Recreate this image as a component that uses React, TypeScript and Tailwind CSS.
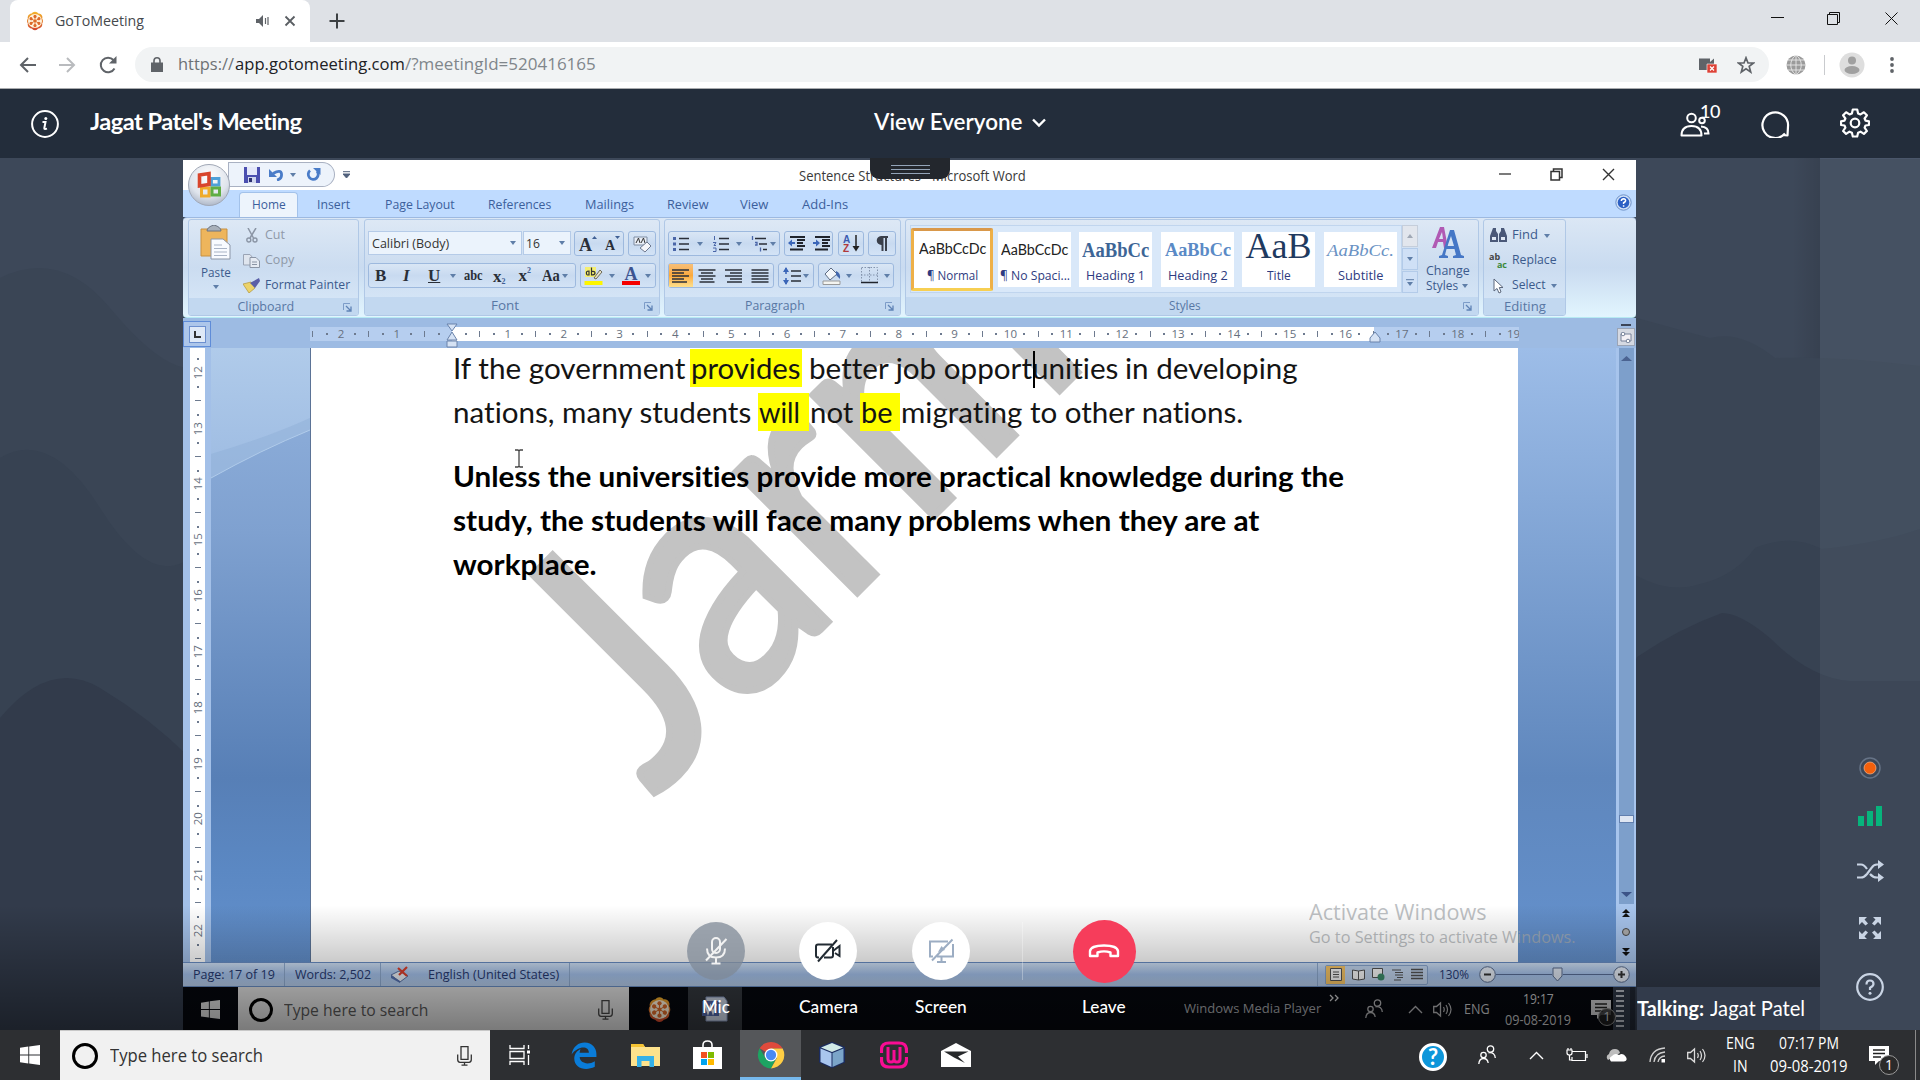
import { useLayoutEffect, useRef, useState, type ReactNode } from "react";

/* Text condensed or widened to a given pixel width. */
function Fit({ w, className = "", children }: { w: number; className?: string; children: string }) {
  const ref = useRef<HTMLSpanElement>(null);
  const [scale, setScale] = useState(1);
  useLayoutEffect(() => {
    const n = ref.current ? ref.current.offsetWidth : 0;
    if (n) setScale(w / n);
  }, [w, children]);
  return (
    <span className={"inline-block shrink-0 whitespace-pre text-left " + className} style={{ width: w }}>
      <span ref={ref} className="inline-block origin-left" style={{ transform: `scaleX(${scale})` }}>
        {children}
      </span>
    </span>
  );
}

function Ico({ w, h, vb, className = "", children }: { w: number; h: number; vb?: string; className?: string; children: ReactNode }) {
  return (
    <svg width={w} height={h} viewBox={vb ?? `0 0 ${w} ${h}`} fill="none" className={"block shrink-0 " + className}>
      {children}
    </svg>
  );
}

function Flower({ s, className = "" }: { s: number; className?: string }) {
  return (
    <Ico w={s} h={s} vb="0 0 24 24" className={className}>
      <defs>
        <linearGradient id="fl" x1="0" y1="0" x2="0" y2="1">
          <stop offset="0" stopColor="#f4b52c" />
          <stop offset="1" stopColor="#d0432b" />
        </linearGradient>
      </defs>
      <path d="M12 1c2 0 3 1 3.800 2 2-.3 4.500 1 5 3.500.2 1 0 1.800-.2 2.500 1.300 1.500 1.300 4.500 0 6 .8 3-1.800 6-4.800 6C15 22 14 23 12 23s-3-1-3.800-2c-3 0-5.600-3-4.800-6-1.300-1.500-1.300-4.500 0-6-.8-3 1.800-6 4.800-6C9 2 10 1 12 1z" fill="url(#fl)" />
      <circle cx="12" cy="12" r="8.400" fill="#fff3dc" />
      <circle cx="12" cy="12" r="1.700" fill="#e0782a" />
      {[0, 60, 120, 180, 240, 300].map((a) => (
        <circle key={a} cx="12" cy="6.500" r="1.900" fill="#dd6a29" transform={`rotate(${a} 12 12)`} />
      ))}
      {[0, 60, 120].map((a) => (
        <path key={a} d="M12 6V18" stroke="#dd6a29" strokeWidth="1" transform={`rotate(${a} 12 12)`} />
      ))}
    </Ico>
  );
}

const Down = ({ className = "" }: { className?: string }) => (
  <Ico w={6} h={4} className={className}>
    <path d="M0 0H6L3 4z" fill="#5f7ea8" />
  </Ico>
);

/* ---------- Browser ---------- */
function Browser() {
  return (
    <>
      <div className="flex h-[42px] bg-[#dee1e6]">
        <div className="ml-[10px] flex h-[42px] w-[300px] items-center rounded-t-lg bg-white">
          <Flower s={20} className="ml-[15px]" />
          <Fit w={89} className="mb-[2px] ml-[10px] text-[15px] leading-none text-[#45494d]">GoToMeeting</Fit>
          <Ico w={13} h={12} className="ml-[112px]">
            <path d="M0 4H3L7 0V12L3 8H0z" fill="#5f6368" />
            <path d="M9.500 3V9M12 2V10" stroke="#5f6368" strokeWidth="1.200" />
          </Ico>
          <Ico w={12} h={12} className="ml-[15px]">
            <path d="M1.500 1.500L10.500 10.500M10.500 1.500L1.500 10.500" stroke="#5a5e63" strokeWidth="1.800" />
          </Ico>
        </div>
        <Ico w={16} h={16} className="ml-[19px] mt-[13px]">
          <path d="M8 0.500V15.500M0.500 8H15.500" stroke="#3c4043" strokeWidth="2" />
        </Ico>
        <div className="ml-auto mr-[22px] flex h-[34px] items-center pt-[2px]">
          <Ico w={13} h={13}><path d="M0 5.500H13" stroke="#111" /></Ico>
          <Ico w={13} h={13} className="ml-[43px]"><path d="M.5 2.500H10.500V12.500H.5zM2.500 2.500V.5H12.500V10.500H10.500" stroke="#111" /></Ico>
          <Ico w={13} h={13} className="ml-[45px]"><path d="M.5.5L12.500 12.500M12.500.5L.5 12.500" stroke="#111" /></Ico>
        </div>
      </div>
      <div className="flex h-[47px] items-center border-b border-[#a9abae] bg-white pb-[1px]">
        <Ico w={17} h={16} className="ml-[19px]"><path d="M17 8H2M9 1L2 8l7 7" stroke="#5f6368" strokeWidth="2" /></Ico>
        <Ico w={17} h={16} className="ml-[23px]"><path d="M0 8H15M8 1l7 7-7 7" stroke="#b9bbbe" strokeWidth="2" /></Ico>
        <Ico w={18} h={18} className="ml-[23px]">
          <path d="M15.500 12.500A7.300 7.300 0 1 1 14.500 4" stroke="#5f6368" strokeWidth="2" />
          <path d="M17.500 0V7.500H10z" fill="#5f6368" />
        </Ico>
        <div className="ml-[18px] flex h-[35px] w-[1634px] items-center rounded-full bg-[#f1f3f4] text-[17px] leading-none">
          <Ico w={12} h={15} className="ml-[16px]">
            <path d="M0 5.500H12V15H0z" fill="#5f6368" />
            <path d="M3 6V3.800A3 3 0 0 1 9 3.800V6" stroke="#5f6368" strokeWidth="1.600" />
          </Ico>
          <div className="mb-[2px] ml-[15px] flex">
            <Fit w={56} className="text-[#6d7175]">https://</Fit>
            <Fit w={170} className="ml-[1px] text-[#202124]">app.gotomeeting.com</Fit>
            <Fit w={191} className="text-[#80868b]">/?meetingId=520416165</Fit>
          </div>
          <Ico w={18} h={16} className="ml-auto">
            <path d="M0 1.500H11V5L15 1.500V13H0z" fill="#5f6368" />
            <path d="M8 7H18V16H8z" fill="#dd4237" stroke="#fff" strokeWidth=".6" />
            <path d="M11 9.500L15 13.500M15 9.500L11 13.500" stroke="#fff" strokeWidth="1.200" />
          </Ico>
          <Ico w={18} h={18} className="ml-[20px] mr-[14px]">
            <path d="M9 1.800L11 7H16.500L12.200 10.400 13.700 16 9 12.700 4.300 16 5.800 10.400 1.500 7H7z" stroke="#5f6368" strokeWidth="1.700" />
          </Ico>
        </div>
        <Ico w={20} h={20} className="ml-[17px]">
          <circle cx="10" cy="10" r="9.500" fill="#9b9b9b" />
          <path d="M10 0V20M0 10H20M2 5H18M2 15H18M10 0C3 5 3 15 10 20M10 0C17 5 17 15 10 20" stroke="#e9e9e9" strokeWidth=".9" />
        </Ico>
        <div className="ml-[18px] h-5 w-px bg-[#c9cbce]" />
        <Ico w={26} h={26} className="ml-[14px]">
          <circle cx="13" cy="13" r="12.500" fill="#dedede" />
          <circle cx="13" cy="8.500" r="4" fill="#a0a0a0" />
          <ellipse cx="13" cy="18" rx="7.500" ry="4" fill="#a0a0a0" />
        </Ico>
        <Ico w={4} h={18} className="ml-[25px]">
          <circle cx="2" cy="3" r="1.900" fill="#5f6368" /><circle cx="2" cy="9" r="1.900" fill="#5f6368" /><circle cx="2" cy="15" r="1.900" fill="#5f6368" />
        </Ico>
      </div>
    </>
  );
}

/* ---------- Meeting header ---------- */
function Header() {
  return (
    <div className="flex h-[69px] items-center bg-[#232d3b] font-['Lato'] text-[22px] leading-none text-white">
      <Ico w={28} h={28} className="ml-[31px]">
        <circle cx="14" cy="14" r="12.900" stroke="#fff" strokeWidth="2" />
        <path d="M11.500 12H14.500L13.300 18.200Q13.300 19.500 16 18.600" stroke="#fff" strokeWidth="2" />
        <circle cx="14.800" cy="8.600" r="1.500" fill="#fff" />
      </Ico>
      <Fit w={212} className="mb-[3px] ml-[31px] font-bold tracking-[-0.5px]">Jagat Patel's Meeting</Fit>
      <Fit w={149} className="mb-[3px] ml-[572px] font-semibold">View Everyone</Fit>
      <Ico w={14} h={10} className="mb-[2px] ml-[9px]"><path d="M1 1.500L7 7.500 13 1.500" stroke="#fff" strokeWidth="2.400" /></Ico>
      <div className="relative ml-[634px] h-[30px] w-[40px]">
        <Ico w={30} h={25} className="mt-[3px]">
          <circle cx="11.500" cy="6" r="4.300" stroke="#fff" strokeWidth="2" />
          <path d="M1.500 23.500Q1.500 14 11.500 14T21.500 23.500z" stroke="#fff" strokeWidth="2" strokeLinejoin="round" />
          <circle cx="22" cy="8.500" r="2.800" stroke="#fff" strokeWidth="2" />
          <path d="M21 14.500Q28.500 15 28.500 21.500H24" stroke="#fff" strokeWidth="2" />
        </Ico>
        <span className="absolute -top-[7px] left-[20px] text-[18px] font-medium tracking-[-0.5px]">10</span>
      </div>
      <Ico w={30} h={30} className="mb-[2px] ml-[40px]">
        <path d="M25 25.500A12.800 12.800 0 1 1 28 18.500L27.500 27.500Q24.500 27.500 23 26.300" stroke="#fff" strokeWidth="2.200" strokeLinejoin="round" />
      </Ico>
      <Ico w={30} h={30} className="mb-[2px] ml-[50px]">
        <path d="M12.800 1.500H17.200L18.100 5.400 20.500 6.400 23.900 4.300 26.900 7.300 24.600 10.500 25.500 12.700 29 13.300V17L25.500 17.500 24.600 19.600 26.900 23 23.900 25.900 20.500 23.700 18.100 24.700 17.200 28.500H12.800L11.900 24.700 9.500 23.700 6.100 25.900 3.100 23 5.400 19.600 4.500 17.500 1 17V13.300L4.500 12.700 5.400 10.500 3.100 7.300 6.100 4.300 9.500 6.400 11.900 5.400z" stroke="#fff" strokeWidth="2.200" strokeLinejoin="round" />
        <circle cx="15" cy="15" r="4.300" stroke="#fff" strokeWidth="2.200" />
      </Ico>
    </div>
  );
}

/* ---------- Word ---------- */
function TitleBar() {
  return (
    <div className="relative flex h-[30px] items-center bg-white">
      <div className="ml-[45px] mt-[-1px] flex h-[25px] w-[107px] items-center rounded-l-[4px] rounded-r-full border border-[#a9b1c2] bg-[#edf3fb]">
        <Ico w={16} h={16} className="ml-[15px]">
          <path d="M0 0H16V16H0z" fill="#4b4fb0" /><path d="M3 0H13V8H3z" fill="#e4e8fa" /><path d="M4 10H12V16H4z" fill="#cfd5ee" /><path d="M5 11H8V15H5z" fill="#2c3170" />
        </Ico>
        <Ico w={15} h={13} className="ml-[9px]">
          <path d="M4 5.500Q12 1 12.500 6T8 12" stroke="#4a7cc8" strokeWidth="2.800" /><path d="M0 1V9H8z" fill="#4a7cc8" />
        </Ico>
        <Down className="ml-[6px]" />
        <Ico w={15} h={14} className="ml-[10px]">
          <path d="M4 2.500A5 5 0 1 0 11 3" stroke="#4a7cc8" strokeWidth="2.800" /><path d="M7 0H14.500V7z" fill="#4a7cc8" />
        </Ico>
      </div>
      <Ico w={7} h={7} className="mb-[1px] ml-[8px]"><path d="M0 .7H7M0 3H7L3.500 7z" stroke="#51617c" fill="#51617c" /></Ico>
      <Fit w={227} className="ml-[449px] mt-[2px] text-[14.500px] leading-none text-[#3a3a3a]">Sentence Structures - Microsoft Word</Fit>
      <Ico w={12} h={12} className="ml-[473px]"><path d="M0 5H12" stroke="#333" strokeWidth="1.300" /></Ico>
      <Ico w={13} h={13} className="mb-[2px] ml-[39px]"><path d="M1 3.500H9.500V12H1zM3.500 3.500V1H12V9.500H9.500" stroke="#333" strokeWidth="1.500" /></Ico>
      <Ico w={13} h={13} className="mb-[2px] ml-[39px]"><path d="M1 1L12 12M12 1L1 12" stroke="#333" strokeWidth="1.400" /></Ico>
      <div className="absolute left-[687px] top-[-2px] flex h-[21px] w-[80px] flex-col items-center gap-[3px] rounded-b-[9px] bg-[#23272d] pt-[7px]">
        <div className="h-px w-[39px] bg-[#93a4b8]" />
        <div className="h-px w-[39px] bg-[#93a4b8]" />
        <div className="h-px w-[39px] bg-[#93a4b8]" />
      </div>
      <Ico w={44} h={44} className="absolute left-[4px] top-[2px]">
        <defs>
          <radialGradient id="orb" cx=".5" cy=".3" r=".8"><stop offset="0" stopColor="#fff" /><stop offset=".6" stopColor="#dfe4ec" /><stop offset="1" stopColor="#9aa6ba" /></radialGradient>
        </defs>
        <circle cx="22" cy="23" r="20.500" fill="url(#orb)" stroke="#a1a8b6" />
        <path d="M24.500 16.500H32V23H24.500z" stroke="#4fa0d8" strokeWidth="2.800" />
        <path d="M14.500 26H22V34H14.500z" stroke="#f0ab2a" strokeWidth="3" />
        <path d="M25 26H32.500V33H25z" stroke="#5fae44" strokeWidth="3" />
        <path d="M12.500 13L22 11.500V22.500L12.500 24z" stroke="#d8452c" strokeWidth="3.600" />
      </Ico>
    </div>
  );
}

const tabs: [string, number, number][] = [
  ["Insert", 33, 19], ["Page Layout", 70, 35], ["References", 63, 33], ["Mailings", 49, 34],
  ["Review", 41, 33], ["View", 28, 32], ["Add-Ins", 46, 34],
];

function Tabs() {
  return (
    <div className="flex h-[27px] items-end bg-[#bfdbff] text-[13px] leading-none text-[#3c5f9c]">
      <div className="ml-[56px] flex h-[25px] w-[59px] items-center rounded-t-[4px] border border-b-0 border-[#a3c2ea] bg-[#edf4fc] pb-px pl-[12px]">
        <Fit w={34}>Home</Fit>
      </div>
      {tabs.map(([t, w, m]) => (
        <div key={t} className="flex h-[25px] items-center">
          <div className="shrink-0" style={{ width: m }} />
          <Fit w={w}>{t}</Fit>
        </div>
      ))}
      <Ico w={17} h={17} className="ml-auto mr-[4px] mb-[6px]">
        <circle cx="8.500" cy="8.500" r="7.700" fill="#cfe0f7" stroke="#6f92c8" />
        <circle cx="8.500" cy="8.500" r="5.800" fill="#2b5fc4" />
        <path d="M6.300 7Q6.500 4.800 8.700 4.800 10.800 5 10.600 6.800 10.300 8 8.600 8.800V10M8.600 11.300V12.700" stroke="#fff" strokeWidth="1.500" />
      </Ico>
    </div>
  );
}

function Group({ label, w, lw, launcher = true, className = "", children }: { label: string; w: string; lw: number; launcher?: boolean; className?: string; children: ReactNode }) {
  return (
    <div className={"flex h-[97px] shrink-0 flex-col overflow-hidden rounded-[3px] border border-[#b0c8e6] bg-gradient-to-b from-[#dde8f5] via-[#cbdcf0] to-[#d9e9f9] " + w + " " + className}>
      <div className="h-[78px]">{children}</div>
      <div className="flex h-[18px] items-center bg-[#c2d8f0] pt-px text-[12.500px] leading-none text-[#5877a4]">
        <span className="flex flex-1 justify-center"><Fit w={lw}>{label}</Fit></span>
        {launcher && <Ico w={9} h={9} className="mr-[6px]"><path d="M.5 7V.5H7" stroke="#7d9cc8" /><path d="M3 3L8 8M8 3.500V8H3.500" stroke="#5f83b5" strokeWidth="1.300" /></Ico>}
      </div>
    </div>
  );
}

const Box = ({ className = "", children }: { className?: string; children: ReactNode }) => (
  <div className={"flex h-[25px] shrink-0 items-center rounded-[3px] border border-[#9db9de] bg-gradient-to-b from-[#d9e6f5] via-[#c8daf0] to-[#d3e3f6] leading-none " + className}>{children}</div>
);

const Lines = ({ ws, align = "l", className = "" }: { ws: number[]; align?: string; className?: string }) => (
  <Ico w={18} h={14} className={className}>
    {ws.map((v, i) => {
      const x = align === "l" ? 0 : align === "c" ? (18 - v) / 2 : 18 - v;
      return <path key={i} d={`M${x} ${1 + i * 3}H${x + v}`} stroke="#2a2f38" strokeWidth="1.500" />;
    })}
  </Ico>
);

function Clipboard() {
  return (
    <Group label="Clipboard" w="w-[171px]" lw={57} className="ml-[5px]">
      <div className="flex text-[12.500px] leading-none">
        <div className="ml-[11px] flex w-[31px] flex-col items-center pt-[5px] text-[#3b5a8c]">
          <Ico w={31} h={35}>
            <path d="M1 4H27V31H1z" fill="#eeb55c" stroke="#c79143" /><path d="M7 6Q7 2 14 0Q21 2 21 6z" fill="#a8b0ba" stroke="#6a7280" />
            <path d="M11 14H23L30 20V34H11z" fill="#f8fbff" stroke="#8b96a8" /><path d="M14 20H22M14 23.500H27M14 27H27M14 30.500H27" stroke="#a9b4c6" />
          </Ico>
          <Fit w={30} className="mt-[7px]">Paste</Fit>
          <Down className="mt-[5px]" />
        </div>
        <div className="ml-[12px] flex flex-col text-[#8f99a8]">
          <div className="mt-[3px] flex h-[25px] items-center">
            <Ico w={12} h={15} className="ml-[3px]"><path d="M2 0L7.500 10M10 0L4 10" stroke="#8b95a5" strokeWidth="1.500" /><circle cx="2.800" cy="12" r="2" stroke="#8b95a5" strokeWidth="1.400" /><circle cx="9" cy="12" r="2" stroke="#8b95a5" strokeWidth="1.400" /></Ico>
            <Fit w={20} className="ml-[7px]">Cut</Fit>
          </div>
          <div className="flex h-[25px] items-center">
            <Ico w={17} h={14}><path d="M.5.5H7L10 4V11H.5z" fill="#dfe5ee" stroke="#9aa4b5" /><path d="M7 3.500H13L16.500 7V13.500H7z" fill="#e6ebf3" stroke="#8b95a5" /><path d="M9 8H14M9 10.500H14" stroke="#8b95a5" /></Ico>
            <Fit w={29} className="ml-[5px]">Copy</Fit>
          </div>
          <div className="flex h-[25px] items-center text-[#3b5a8c]">
            <Ico w={17} h={15}><path d="M0 6L8 4 12 10 6 15z" fill="#ecd36a" stroke="#b0933a" strokeWidth=".7" /><path d="M7 5L16 0 17 3 12 10z" fill="#5a5fa8" /></Ico>
            <Fit w={85} className="ml-[5px]">Format Painter</Fit>
          </div>
        </div>
      </div>
    </Group>
  );
}

function FontGroup() {
  return (
    <Group label="Font" w="w-[296px]" lw={28} className="ml-[5px]">
      <div className="flex flex-col gap-[7px] pl-[3px] pt-[11px] font-['Liberation_Serif'] text-[#2a2f38]">
        <div className="flex h-[25px]">
          <div className="flex h-[24px] w-[154px] items-center border border-[#b5cbe8] bg-[#ebf3fc] pl-[3px] font-['Open_Sans'] text-[13px] leading-none text-[#333]">
            <Fit w={77}>Calibri (Body)</Fit><Down className="ml-[61px]" />
          </div>
          <div className="ml-px flex h-[24px] w-[48px] items-center border border-[#b5cbe8] bg-[#ebf3fc] pl-[2px] font-['Open_Sans'] text-[13px] leading-none text-[#333]">
            <Fit w={14}>16</Fit><Down className="ml-[19px]" />
          </div>
          <Box className="ml-[3px] w-[50px] font-bold">
            <span className="ml-[4px] mt-[2px] text-[18px]">A</span><Ico w={5} h={3} className="mb-[12px]"><path d="M0 3L2.500 0 5 3z" fill="#3f5f94" /></Ico>
            <span className="ml-[8px] mt-[4px] text-[14px]">A</span><Ico w={5} h={3} className="mb-[12px]"><path d="M0 0L2.500 3 5 0z" fill="#3f5f94" /></Ico>
          </Box>
          <Box className="ml-[4px] w-[28px]">
            <Ico w={20} h={18} className="ml-[4px]"><path d="M1 2H14V10H1z" fill="#e9eef6" stroke="#7f8da3" /><path d="M3 8L5.500 3 7 8M8 8L10.500 3 12 8" stroke="#333" /><path d="M7 13L14 7 18 11 12 17z" fill="#f6f6fa" stroke="#6f7a90" /></Ico>
          </Box>
        </div>
        <div className="flex">
          <Box className="w-[208px] text-[17px]">
            <span className="ml-[6px] w-[13px] font-bold">B</span>
            <span className="ml-[15px] w-[10px] font-bold italic">I</span>
            <span className="ml-[15px] w-[13px] font-bold underline">U</span>
            <Down className="ml-[9px]" />
            <Fit w={19} className="ml-[8px] text-[15px] font-bold line-through">abc</Fit>
            <span className="ml-[10px] mt-[2px] flex items-end font-bold">x<i className="text-[8px] not-italic leading-[6px] text-[#3f5f94]">2</i></span>
            <span className="ml-[13px] flex items-start font-bold">x<i className="text-[8px] not-italic leading-[8px] text-[#3f5f94]">2</i></span>
            <Fit w={18} className="ml-[11px] text-[17px] font-bold">Aa</Fit>
            <Down className="ml-[2px]" />
          </Box>
          <Box className="ml-[4px] w-[76px]">
            <Ico w={19} h={19} className="ml-[3px]"><path d="M.5 15H18.500V19H.5z" fill="#fdf500" /><path d="M1 1H12V11H1z" fill="#f4ee70" /><path d="M3 9Q1 5 5 5V9H3M7.500 1.500V9Q11 9 11 7T7.500 5.500" stroke="#333" strokeWidth="1.200" /><path d="M10 12L16 4 18 6 12 13z" fill="#e8e3c8" stroke="#6d6a58" /></Ico>
            <Down className="ml-[6px]" />
            <div className="ml-[7px] flex w-[18px] flex-col items-center"><span className="h-[15px] text-[18px] leading-[17px] font-bold text-[#3d5490]">A</span><div className="h-[4px] w-[18px] bg-[#f40000]" /></div>
            <Down className="ml-[5px]" />
          </Box>
        </div>
      </div>
    </Group>
  );
}

function ListIcon({ kind }: { kind: number }) {
  return (
    <Ico w={16} h={16} className="ml-[4px]">
      {kind < 2 ? (
        <>
          <path d="M6 2.500H16M6 8H16M6 13.500H16" stroke="#2a2f38" strokeWidth="1.500" />
          {kind === 0 ? <path d="M0 1H3V4H0zM0 6.500H3V9.500H0zM0 12H3V15H0z" fill="#4a66a8" /> : <path d="M1.500 0V4M0 6.500H3L1 9.500H3M0 12H3V15.500H0" stroke="#4a66a8" />}
        </>
      ) : (
        <><path d="M4 2.500H15M8 8H16M12 13.500H16" stroke="#2a2f38" strokeWidth="1.500" /><path d="M1.500 0V4M4 6.500H6V9H4M9.500 11.500V15.500" stroke="#4a66a8" strokeWidth="1.300" /></>
      )}
    </Ico>
  );
}

function IndentIcon({ flip = false }: { flip?: boolean }) {
  return (
    <Ico w={17} h={15} className="ml-[3px]">
      <path d="M2 1H17M9 4H17M9 7H15M9 10H17M2 13.500H15" stroke="#20242c" strokeWidth="1.800" />
      <path d={flip ? "M7 7L3 3.500V10.500zM0 6H3V8H0z" : "M0 7L4 3.500V10.500zM4 6H7V8H4z"} fill="#3b66b8" />
    </Ico>
  );
}

function Paragraph() {
  return (
    <Group label="Paragraph" w="w-[237px]" lw={60} className="ml-[4px]">
      <div className="flex flex-col gap-[7px] pl-[3px] pt-[11px]">
        <div className="flex">
          <Box className="w-[112px]">
            <ListIcon kind={0} /><Down className="ml-[8px]" /><span className="w-[6px]" />
            <ListIcon kind={1} /><Down className="ml-[7px]" /><span className="w-[5px]" />
            <ListIcon kind={2} /><Down className="ml-[3px]" />
          </Box>
          <Box className="ml-[4px] w-[49px]"><IndentIcon /><span className="w-[5px]" /><IndentIcon flip /></Box>
          <Box className="ml-[5px] w-[26px]">
            <div className="ml-[4px] flex flex-col font-['Liberation_Sans'] text-[10px] leading-[9px] font-bold"><span className="text-[#3b5bb0]">A</span><span className="text-[#b0383b]">Z</span></div>
            <Ico w={8} h={17} className="ml-[2px]"><path d="M4 0V15" stroke="#222" strokeWidth="1.500" /><path d="M.5 11H7.500L4 16.500z" fill="#222" /></Ico>
          </Box>
          <Box className="ml-[4px] w-[28px] justify-center"><Ico w={12} h={16}><path d="M5 0H12V2H11V15H9V2H7.500V15H5.500V9A4.500 4.500 0 0 1 5 0z" fill="#3a3f4a" /></Ico></Box>
        </div>
        <div className="flex">
          <Box className="w-[106px]">
            <div className="flex h-[23px] w-[24px] items-center justify-center bg-gradient-to-b from-[#f6bf78] via-[#fba93a] to-[#fde08c]"><Lines ws={[17, 12, 17, 12, 15]} /></div>
            <Lines ws={[17, 12, 17, 12, 15]} align="c" className="ml-[5px]" />
            <Lines ws={[17, 12, 17, 12, 15]} align="r" className="ml-[8px]" />
            <Lines ws={[17, 17, 17, 17, 17]} align="c" className="ml-[9px]" />
          </Box>
          <Box className="ml-[4px] w-[36px]">
            <Ico w={18} h={18} className="ml-[4px]"><path d="M3 1V7M3 11V17" stroke="#3b66b8" strokeWidth="1.600" /><path d="M0 5L3 0 6 5zM0 13H6L3 18z" fill="#3b66b8" /><path d="M8 4H18M8 9H18M8 14H18" stroke="#2a2f38" strokeWidth="1.500" /></Ico>
            <Down className="ml-[2px]" />
          </Box>
          <Box className="ml-[4px] w-[76px]">
            <Ico w={20} h={19} className="ml-[3px]"><path d="M1 15H18V18.500H1z" fill="#f4f4f0" stroke="#999" /><path d="M3 8L9 2 15 8 8 14z" fill="#f4f7fb" stroke="#5d6b82" /><path d="M14 5Q19 7 18 13L14 9z" fill="#4268ae" /></Ico>
            <Down className="ml-[4px]" />
            <Ico w={17} h={17} className="ml-[9px]"><path d="M.5.5H16.500V15.500H.5zM8.500 0V16M0 8H17" stroke="#8494ad" strokeDasharray="1.500 1.500" /><path d="M0 15.500H17" stroke="#20242c" strokeWidth="1.600" /></Ico>
            <Down className="ml-[6px]" />
          </Box>
        </div>
      </div>
    </Group>
  );
}

const styles: { name: string; nw: number; s: string; sw: number; cls: string; gap: string }[] = [
  { name: "¶ No Spaci...", nw: 70, s: "AaBbCcDc", sw: 67, cls: "font-['Lato'] text-[14.500px] text-[#222]", gap: "ml-[5px]" },
  { name: "Heading 1", nw: 59, s: "AaBbCc", sw: 67, cls: "font-['Liberation_Serif'] text-[20px] font-bold text-[#3d6596]", gap: "ml-[8px]" },
  { name: "Heading 2", nw: 60, s: "AaBbCc", sw: 66, cls: "font-['Liberation_Serif'] text-[18px] font-bold text-[#5a8ac6]", gap: "ml-[9px]" },
  { name: "Title", nw: 24, s: "AaB", sw: 66, cls: "mb-[8px] font-['Liberation_Serif'] text-[36px] text-[#1f3a5f]", gap: "ml-[8px]" },
  { name: "Subtitle", nw: 45, s: "AaBbCc.", sw: 67, cls: "font-['Liberation_Serif'] text-[17px] italic text-[#6a92c4]", gap: "ml-[9px]" },
];

function StylesGroup() {
  return (
    <Group label="Styles" w="w-[574px]" lw={32} className="ml-[4px]">
      <div className="flex text-[12.500px] leading-none text-[#2e3b80]">
        <div className="ml-[4px] mt-[5px] flex h-[68px] w-[492px] items-center border border-[#c0d5ee] bg-[#d9e8f9]">
          <div className="flex h-[63px] w-[82px] shrink-0 flex-col items-center rounded-[2px] border-[3px] border-[#eeb048] border-b-[#f7cf52] border-t-[#d9984a] bg-white">
            <span className="flex h-[38px] items-center text-[14.500px] text-[#222]"><Fit w={67} className="font-['Lato']">AaBbCcDc</Fit></span>
            <Fit w={51} className="mt-[1px]">¶ Normal</Fit>
          </div>
          {styles.map((s) => (
            <div key={s.name} className={"flex h-[55px] w-[73px] shrink-0 flex-col items-center overflow-hidden bg-white " + s.gap}>
              <span className="flex h-[37px] items-center"><Fit w={s.sw} className={s.cls}>{s.s}</Fit></span>
              <Fit w={s.nw} className="mt-[1px]">{s.name}</Fit>
            </div>
          ))}
        </div>
        <div className="mt-[5px] flex w-[16px] flex-col gap-px">
          <div className="flex h-[22px] items-center justify-center border border-[#c5cedb] bg-[#e2e6ed]"><Ico w={6} h={4}><path d="M0 4H6L3 0z" fill="#a0a8b5" /></Ico></div>
          <div className="flex h-[22px] items-center justify-center border border-[#b3cbe9] bg-[#cfe0f6]"><Down /></div>
          <div className="flex h-[22px] items-center justify-center border border-[#b3cbe9] bg-[#cfe0f6]"><Ico w={8} h={7}><path d="M0 .7H8" stroke="#5f7ea8" /><path d="M1 3H7L4 7z" fill="#5f7ea8" /></Ico></div>
        </div>
        <div className="ml-[8px] flex w-[44px] flex-col items-center pt-[6px] text-[13px] text-[#3b5a8c]">
          <Ico w={34} h={33}>
            <path d="M1 22L9 1H13L17 22H13L12 16H7L5 22zM8 13H12L11 6z" fill="#b05ab4" fillRule="evenodd" />
            <path d="M8 32V30L11 29 19 4H23L30 29 33 30V32H22V30L25 29 23.500 23H15.500L14 29 17 30V32zM16.500 20H23L20 10z" fill="#4577c6" fillRule="evenodd" />
          </Ico>
          <Fit w={44} className="mt-[5px]">Change</Fit>
          <div className="mt-[2px] flex items-center gap-[4px] self-start"><Fit w={32}>Styles</Fit><Down /></div>
        </div>
      </div>
    </Group>
  );
}

function Editing() {
  return (
    <Group label="Editing" w="w-[83px]" lw={42} launcher={false} className="ml-[4px]">
      <div className="flex flex-col pl-[5px] pt-[3px] text-[12.500px] leading-none text-[#3b5a8c]">
        <div className="flex h-[25px] items-center">
          <Ico w={17} h={15} className="ml-[1px]"><path d="M3 0H6V3L8 6V14H0V8zM14 0H11V3L9 6V14H17V8z" fill="#4a5878" /><path d="M2 9H6V12H2zM11 9H15V12H11z" fill="#dfe8f5" /></Ico>
          <Fit w={26} className="ml-[5px]">Find</Fit><Down className="ml-[6px]" />
        </div>
        <div className="flex h-[25px] items-center">
          <div className="flex w-[18px] flex-col text-[9px] leading-[8px] font-bold"><span className="text-[#444]">ab</span><span className="text-right text-[#3c8a3c]">ac</span></div>
          <Fit w={45} className="ml-[5px]">Replace</Fit>
        </div>
        <div className="flex h-[25px] items-center">
          <Ico w={11} h={16} className="ml-[4px]"><path d="M1 1V13L4 10.500 6 15 8 14 6.300 9.500H10z" fill="#fff" stroke="#5b677c" /></Ico>
          <Fit w={34} className="ml-[8px]">Select</Fit><Down className="ml-[5px]" />
        </div>
      </div>
    </Group>
  );
}

const hNums = ["2", "1", "", ...Array.from({ length: 19 }, (_, i) => String(i + 1))];

function Cell({ n, first = false }: { n: string; first?: boolean }) {
  return (
    <span className={"flex h-[14px] w-[55.850px] shrink-0 items-center " + (first ? "ml-[7px]" : "")}>
      <span className="flex w-1/4 justify-center"><i className="h-[2px] w-[2px] bg-[#6d7a8f]" /></span>
      <span className="flex w-1/4 justify-center">{n}</span>
      <span className="flex w-1/4 justify-center"><i className="h-[2px] w-[2px] bg-[#6d7a8f]" /></span>
      <span className="flex w-1/4 justify-center"><i className="h-[6px] w-px bg-[#6d7a8f]" /></span>
    </span>
  );
}

function Ruler() {
  return (
    <div className="relative flex h-[30px] items-start bg-[#9dbbe3]">
      <div className="mt-[3px] flex h-[26px] w-[28px] items-center justify-center border border-[#5f8cd8] bg-[#adc6ea]">
        <div className="flex h-[17px] w-[17px] items-center justify-center border border-[#6d90cf] bg-[#dfe9f7]"><Ico w={7} h={7}><path d="M1 0V6H7" stroke="#333" strokeWidth="2" /></Ico></div>
      </div>
      <div className="ml-[99px] mt-[9px] flex h-[14px] w-[1209px] items-center overflow-hidden text-[11.500px] leading-none text-[#66707e]">
        <div className="flex w-[142px] shrink-0 items-center bg-[#b6ceef]"><span className="ml-[2px] h-[6px] w-px bg-[#6d7a8f]" /><div className="flex">{hNums.slice(0, 2).map((n) => <Cell key={n} n={n} first={n === "2"} />)}<span className="flex h-[14px] w-[14px] items-center justify-center"><i className="h-[2px] w-[2px] bg-[#6d7a8f]" /></span></div></div>
        <div className="flex h-[14px] w-[922px] shrink-0 items-center overflow-hidden bg-white"><span className="w-[7px] shrink-0" /><span className="flex w-[13.960px] shrink-0 justify-center"><i className="h-[2px] w-[2px] bg-[#6d7a8f]" /></span><span className="flex w-[13.960px] shrink-0 justify-center"><i className="h-[6px] w-px bg-[#6d7a8f]" /></span>{hNums.slice(3, 19).map((n) => <Cell key={n} n={n} />)}</div>
        <div className="flex w-[145px] shrink-0 items-center overflow-hidden bg-[#b6ceef]"><span className="w-[7px] shrink-0" />{hNums.slice(19).map((n) => <Cell key={n} n={n} />)}</div>
      </div>
      <div className="ml-auto mr-px flex w-[18px] flex-col items-center">
        <div className="mt-[6px] h-[2px] w-[10px] bg-[#3c4558]" />
        <div className="mt-[2px] flex h-[18px] w-[18px] items-center justify-center border border-[#9aa4b6] bg-[#d5d9e2]"><Ico w={13} h={11}><path d="M1 2H11V9H1z" fill="#f3f0f5" stroke="#76829a" /><circle cx="3" cy="2" r="1.800" fill="#fff" stroke="#76829a" /><circle cx="8" cy="9" r="1.800" fill="#fff" stroke="#76829a" /></Ico></div>
      </div>
      <Ico w={12} h={25} className="absolute left-[263px] top-[5px]"><path d="M1 1H11L6 8zM1 17L6 9 11 17zM1 18H11V24H1z" fill="#d5e2f4" stroke="#6a83ab" /></Ico>
      <Ico w={12} h={12} className="absolute left-[1186px] top-[13px]"><path d="M1 11V7L6 1 11 7V11z" fill="#d5e2f4" stroke="#6a83ab" /></Ico>
    </div>
  );
}

const Hl = ({ w, tw, children, className = "" }: { w: string; tw: number; children: string; className?: string }) => (
  <span className={"flex h-[38px] shrink-0 items-center bg-[#ffff00] pl-px " + w + " " + className}><Fit w={tw}>{children}</Fit></span>
);

function Page() {
  return (
    <div className="relative h-[614px] w-[1208px] shrink-0 overflow-hidden border-l border-[#5b7396] bg-white font-['Lato'] text-[28px] leading-[38px] text-[#141414]">
      <div className="pointer-events-none absolute left-[318px] top-[425px] h-0 w-0">
        <div className="absolute bottom-0 left-0 origin-bottom-left rotate-[-45deg] whitespace-nowrap">
          <span className="absolute bottom-0 left-0 block translate-y-[72px] origin-bottom-left scale-x-[0.880] text-[338px] leading-[338px] text-[#c3c3c3] [-webkit-text-stroke:7px_#c3c3c3]">Jarm</span>
        </div>
      </div>
      <div className="relative ml-[142px]">
        <div className="mt-[1px] flex h-[38px] items-center">
          <Fit w={232}>If the government</Fit>
          <Hl w="w-[112px]" tw={110} className="ml-[5px]">provides</Hl>
          <Fit w={309} className="ml-[7px]">better job opportunities</Fit>
          <Fit w={173} className="ml-[7px]">in developing</Fit>
        </div>
        <div className="mt-[6px] flex h-[38px] items-center">
          <Fit w={298}>nations, many students</Fit>
          <Hl w="w-[51px]" tw={41} className="ml-[7px]">will</Hl>
          <Fit w={43} className="ml-px">not</Fit>
          <Hl w="w-[40px]" tw={31} className="ml-[7px]">be</Hl>
          <Fit w={342} className="ml-px">migrating to other nations.</Fit>
        </div>
        <div className="mt-[26px] flex h-[38px] items-center font-bold text-black">
          <Fit w={598}>Unless the universities provide more practical</Fit>
          <Fit w={285} className="ml-[8px]">knowledge during the</Fit>
        </div>
        <div className="mt-[6px] flex h-[38px] items-center font-bold text-black"><Fit w={807}>study, the students will face many problems when they are at</Fit></div>
        <div className="mt-[6px] flex h-[38px] items-center font-bold text-black"><Fit w={144}>workplace.</Fit></div>
        <div className="absolute left-[580px] top-[2px] h-[37px] w-[2px] bg-black" />
        <Ico w={8} h={19} className="absolute left-[62px] top-[100px]"><path d="M0 1H3L4 2 5 1H8M4 2V17M0 18H3L4 17 5 18H8" stroke="#444" strokeWidth="1.300" /></Ico>
      </div>
    </div>
  );
}

function DocArea() {
  return (
    <div className="flex h-[614px]">
      <div className="h-full w-[7px] bg-[#a3c0e8]" />
      <div className="h-full w-[15px] overflow-hidden bg-white text-[11.500px] leading-none text-[#66707e]">
        <div className="mt-[-3px]">
          {Array.from({ length: 11 }, (_, i) => 12 + i).map((n) => (
            <div key={n} className="flex h-[55.850px] flex-col items-center">
              <span className="mt-[13px] h-[2px] w-[2px] bg-[#6d7a8f]" />
              <span className="mt-[4px] flex h-[17px] w-[15px] items-center justify-center"><span className="-rotate-90">{n}</span></span>
              <span className="mt-[5px] h-[2px] w-[2px] bg-[#6d7a8f]" />
              <span className="mt-[12px] h-px w-[6px] bg-[#6d7a8f]" />
            </div>
          ))}
        </div>
      </div>
      <div className="h-full w-[6px] bg-[#a3c0e8]" />
      <Ico w={99} h={614}>
        <defs>
          <linearGradient id="bg1" x1="0" y1="0" x2="0" y2="1"><stop offset="0" stopColor="#93b3de" /><stop offset=".3" stopColor="#7fa1d0" /><stop offset=".7" stopColor="#577fb6" /><stop offset=".85" stopColor="#5b88c3" /><stop offset="1" stopColor="#6390cc" /></linearGradient>
          <linearGradient id="bg2" x1="0" y1="0" x2="0" y2="1"><stop offset="0" stopColor="#b0cbea" /><stop offset="1" stopColor="#9dbbe2" /></linearGradient>
        </defs>
        <path d="M0 0H99V614H0z" fill="url(#bg1)" />
        <path d="M0 0H99V82Q50 102 0 130z" fill="url(#bg2)" />
        <path d="M0 106Q55 90 99 70V82Q50 102 0 130z" fill="#8fafd8" opacity=".5" />
        <path d="M0 130Q50 102 99 82" stroke="#b0cbea" />
      </Ico>
      <Page />
      <div className="h-full w-[98px] bg-gradient-to-b from-[#9dbde8] via-[#5f87bd] via-70% to-[#6491cd]" />
      <div className="flex h-full w-[20px] flex-col items-center bg-[#a7c4ec]">
        <div className="flex h-[556px] w-[15px] flex-col items-center bg-[#7d9fcb]">
          <Ico w={11} h={5} className="mt-[8px]"><path d="M0 5H11L5.500 0z" fill="#4b6391" /></Ico>
          <div className="mt-[454px] h-[8px] w-[15px] border border-[#627fae] bg-[#dfe6f2]" />
          <Ico w={11} h={5} className="mt-[69px]"><path d="M0 0H11L5.500 5z" fill="#3c5488" /></Ico>
        </div>
        <Ico w={8} h={8} className="mt-[5px]"><path d="M4 0L8 4H0zM4 4L8 8H0z" fill="#111" /></Ico>
        <div className="mt-[11px] h-[8px] w-[8px] rounded-full border border-[#444] bg-[#aaa]" />
        <Ico w={8} h={8} className="mt-[12px]"><path d="M0 0H8L4 4zM0 4H8L4 8z" fill="#111" /></Ico>
      </div>
    </div>
  );
}

function StatusBar() {
  return (
    <div className="flex h-[25px] items-center border-y border-[#6a8fc6] bg-gradient-to-b from-[#d3e4f9] via-[#a9c7f2] to-[#b9d0ee] text-[13px] leading-none text-[#273a72]">
      <Fit w={82} className="ml-[10px]">Page: 17 of 19</Fit>
      <div className="ml-[9px] h-full w-px bg-[#90acd2]" />
      <Fit w={76} className="ml-[10px]">Words: 2,502</Fit>
      <div className="ml-[9px] h-full w-px bg-[#90acd2]" />
      <Ico w={20} h={17} className="ml-[9px]"><path d="M1 9L9 5 18 10 10 16z" fill="#f1f5fb" stroke="#5b74a6" /><path d="M1 9V12L10 17V15" fill="#5571b0" /><path d="M8 2L17 10M17 1L9 9" stroke="#e0402c" strokeWidth="2.200" /></Ico>
      <Fit w={131} className="ml-[18px]">English (United States)</Fit>
      <div className="ml-[10px] h-full w-px bg-[#90acd2]" />
      <div className="ml-auto h-full w-px bg-[#90acd2]" />
      <div className="ml-[7px] flex h-[20px] w-[103px] items-center gap-[7px] rounded-[2px] border border-[#8aa8d2] bg-[#c6daf4]">
        <div className="flex h-full w-[19px] items-center justify-center bg-[#fbc968]"><Ico w={12} h={13}><path d="M.5.5H11.500V12.500H.5z" fill="#fff" stroke="#555" /><path d="M3 4H9M3 6.500H9M3 9H9" stroke="#555" /></Ico></div>
        <Ico w={13} h={13}><path d="M.5 2L6.500 3 12.500 2V11L6.500 12 .5 11zM6.500 3V12" fill="#fff" stroke="#555" /></Ico>
        <Ico w={13} h={13}><path d="M.5.5H10.500V9.500H.5z" fill="#fff" stroke="#555" /><circle cx="9" cy="9" r="3.500" fill="#3d8f6d" /></Ico>
        <Ico w={12} h={13}><path d="M0 2H9M3 4.500H11M3 7H11M5 9.500H11M2 12H9" stroke="#555" /></Ico>
        <Ico w={12} h={13}><path d="M0 1.500H12M0 4.500H12M0 7.500H12M0 10.500H12" stroke="#555" strokeWidth="1.300" /></Ico>
      </div>
      <Fit w={30} className="ml-[11px]">130%</Fit>
      <Ico w={17} h={17} className="ml-[10px]"><circle cx="8.500" cy="8.500" r="7.800" fill="#e9f0fa" stroke="#5c6f90" /><path d="M5 8.500H12" stroke="#333" strokeWidth="2" /></Ico>
      <div className="h-px w-[56px] bg-[#5a7099]" />
      <Ico w={11} h={15}><path d="M1 1H10V9L5.500 14 1 9z" fill="#e3ebf7" stroke="#5c6f90" /></Ico>
      <div className="h-px w-[50px] bg-[#5a7099]" />
      <Ico w={17} h={17} className="mr-[6px]"><circle cx="8.500" cy="8.500" r="7.800" fill="#e9f0fa" stroke="#5c6f90" /><path d="M5 8.500H12M8.500 5V12" stroke="#333" strokeWidth="2" /></Ico>
    </div>
  );
}

/* ---------- Shared taskbar icons ---------- */
const Win = ({ s, c }: { s: number; c: string }) => (
  <Ico w={s} h={s} vb="0 0 20 20"><path d="M0 2.800L8.300 1.500V9.500H0zM9.200 1.400L20 0V9.500H9.200zM0 10.400H8.300V18.500L0 17.300zM9.200 10.400H20V20L9.200 18.600z" fill={c} /></Ico>
);
const TaskMic = ({ c, className = "" }: { c: string; className?: string }) => (
  <Ico w={15} h={20} className={className}><path d="M4 .7H11V13.300H4zM.7 8.500V13.500Q.7 16.300 3 16.300H12Q14.300 16.300 14.300 13.500V8.500M7.500 16.300V19M4.500 19.200H10.500" stroke={c} strokeWidth="1.300" /></Ico>
);
const People = ({ c, className = "" }: { c: string; className?: string }) => (
  <Ico w={18} h={20} className={className}><circle cx="12.500" cy="4" r="3.200" stroke={c} strokeWidth="1.300" /><circle cx="5.500" cy="10" r="2.700" stroke={c} strokeWidth="1.300" /><path d="M.8 19Q1.200 13.500 5.500 13.500 9.500 13.500 10.200 18M10.500 7.800Q17 7 17.300 13" stroke={c} strokeWidth="1.300" /></Ico>
);
const Up = ({ c, className = "" }: { c: string; className?: string }) => (
  <Ico w={15} h={9} className={className}><path d="M1 8L7.500 1.500 14 8" stroke={c} strokeWidth="1.400" /></Ico>
);
const Vol = ({ c, className = "" }: { c: string; className?: string }) => (
  <Ico w={20} h={17} className={className}><path d="M.7 5.500H3.500L7.500 2V15L3.500 11.500H.7z" stroke={c} strokeWidth="1.300" /><path d="M10.500 6Q12 8.500 10.500 11M13 4Q16 8.500 13 13M15.500 2Q20.500 8.500 15.500 15" stroke={c} strokeWidth="1.200" /></Ico>
);
const Note = ({ c, l, className = "" }: { c: string; l: string; className?: string }) => (
  <Ico w={20} h={19} className={className}><path d="M0 0H20V15H10L6 19V15H0z" fill={c} /><path d="M4 4H16M4 7.500H16M4 11H12" stroke={l} strokeWidth="1.300" /></Ico>
);

function SharedTaskbar() {
  return (
    <div className="flex h-[43px] bg-[#05070d] text-[13.500px] leading-none text-[#c4c4c6]">
      <div className="flex w-[55px] items-center justify-center pt-[2px]"><Win s={19} c="#d8d8d8" /></div>
      <div className="flex w-[391px] items-center bg-[#dedede] pt-[2px]">
        <div className="ml-[11px] h-[24px] w-[24px] rounded-full border-[3.500px] border-black" />
        <Fit w={144} className="ml-[11px] text-[17px] text-[#555]">Type here to search</Fit>
        <TaskMic c="#444" className="ml-auto mr-[16px]" />
      </div>
      <div className="flex w-[59px] items-center justify-center pt-[2px]"><Flower s={27} className="ml-[2px]" /></div>
      <div className="flex w-[54px] items-center justify-center bg-[#33373d]">
        <Ico w={26} h={26}><path d="M4 1H22L25 5V25H4z" fill="#c9d2e2" stroke="#8494ba" /><path d="M0 5H17V20H0z" fill="#4f65a5" /><path d="M3 8L6 17 8.500 10 11 17 14 8" stroke="#fff" strokeWidth="1.800" /></Ico>
      </div>
      <div className="ml-auto flex items-center pt-px">
        <Fit w={137} className="text-[#a3a5a9]">Windows Media Player</Fit>
        <Ico w={10} h={8} className="mb-[23px] ml-[8px]"><path d="M1 1L4 4 1 7M6 1L9 4 6 7" stroke="#ccc" strokeWidth="1.300" /></Ico>
        <People c="#b0b0b2" className="ml-[26px]" />
        <Up c="#b0b0b2" className="ml-[25px]" />
        <Vol c="#b0b0b2" className="ml-[10px]" />
        <Fit w={26} className="ml-[11px] text-[14px]">ENG</Fit>
        <div className="ml-[15px] flex h-[43px] w-[66px] flex-col items-center justify-center gap-[7px] text-[14px]"><Fit w={31}>19:17</Fit><Fit w={66}>09-08-2019</Fit></div>
        <div className="relative ml-[20px] w-[22px]"><Note c="#c8c8ca" l="#222" /><span className="absolute left-[7px] top-[8px] flex h-[18px] w-[18px] items-center justify-center rounded-full border border-[#888] bg-[#222]/80 text-[13px]">1</span></div>
      </div>
      <div className="flex w-[23px] bg-[#2e3746]">
        <div className="ml-[3px] mt-[3px] flex flex-col gap-[3px]">{Array.from({ length: 8 }, (_, i) => <span key={i} className="h-[2px] w-[8px] bg-[#b5bac3]" />)}</div>
        <div className="ml-[6px] w-[5px] bg-[#1f2632]" />
      </div>
    </div>
  );
}

/* ---------- Meeting overlays ---------- */
function Control({ label, lw, big, bg, children }: { label: string; lw: number; big?: boolean; bg: string; children: ReactNode }) {
  return (
    <div className="flex w-[64px] shrink-0 flex-col items-center">
      <div className="flex h-[64px] items-center"><div className={"flex items-center justify-center rounded-full " + (big ? "h-[63px] w-[63px] " : "h-[58px] w-[58px] ") + bg}>{children}</div></div>
      <Fit w={lw} className="mt-[14px] text-[18px] leading-none font-medium text-white">{label}</Fit>
    </div>
  );
}

function Controls() {
  return (
    <div className="absolute left-[684px] top-[761px] flex font-['Lato']">
      <Control label="Mic" lw={28} bg="bg-[#7f8997]/75">
        <Ico w={26} h={30}><rect x="9" y="2" width="8" height="15" rx="4" stroke="#f2f2f2" strokeWidth="2" /><path d="M4 12.500Q4 21.500 13 21.500T22 12.500M13 21.500V27M8.500 27.500H17.500M23.500 3L3 24.500" stroke="#f2f2f2" strokeWidth="2" /></Ico>
      </Control>
      <div className="w-[48px]" />
      <Control label="Camera" lw={59} bg="bg-white">
        <Ico w={28} h={24}><path d="M18 5.500H4Q2 5.500 2 7.500V16.500Q2 18.500 4 18.500H5M10 18.500H17Q19 18.500 19 16.500V8M19 12L25.500 7V17L21 14M23 1L4 22.500" stroke="#222b33" strokeWidth="2" /></Ico>
      </Control>
      <div className="w-[49px]" />
      <Control label="Screen" lw={52} bg="bg-white">
        <Ico w={28} h={26}><path d="M21 3.500H3V18.500H6M10 18.500H26V6M14.500 18.500V23M10 24H19M25.500 1.500L5 22.500" stroke="#9cadc3" strokeWidth="2" /><path d="M11 14L14.500 8 18 12z" fill="#9cadc3" /></Ico>
      </Control>
      <div className="ml-[49px] mt-[3px] h-[58px] w-px bg-white/30" />
      <div className="w-[49px]" />
      <Control label="Leave" lw={44} big bg="bg-[#f63d5b]">
        <Ico w={32} h={16}><path d="M2 13V8Q3 2.500 16 2.500T30 8V13H22.500V9.500Q16 7.300 9.500 9.500V13z" stroke="#fff" strokeWidth="2.400" strokeLinejoin="round" /></Ico>
      </Control>
    </div>
  );
}

function Sidebar() {
  const c = "#c9d4e4";
  return (
    <div className="relative flex h-full w-[100px] shrink-0 flex-col items-center border-t border-[#4a566a] bg-[#6b7688]/20">
      <Ico w={22} h={22} className="mt-[598px]"><circle cx="11" cy="11" r="10" stroke="#667386" strokeWidth="1.500" /><circle cx="11" cy="11" r="6" fill="#f4600c" stroke="#fbb48a" strokeWidth=".7" /></Ico>
      <Ico w={24} h={20} className="mt-[27px]"><path d="M0 10H6V20H0zM9 5H15V20H9zM18 0H24V20H18z" fill="#07b47c" /></Ico>
      <Ico w={28} h={22} className="mt-[34px]"><path d="M1 4.500H5Q8 4.500 11 9M14 14Q17 17.500 21 17.500H25M1 17.500H5Q8 17.500 11 14L15.500 8Q17.500 4.500 21 4.500H25" stroke={c} strokeWidth="2.200" /><path d="M22 0L28 4.500 22 9zM22 13L28 17.500 22 22z" fill={c} /></Ico>
      <Ico w={22} h={22} className="mt-[35px]"><path d="M0 0H8L5.500 2.500 9 6.500 6.500 8.500 3 5 0 8zM22 0V8L19 5 15.500 8.500 13 6.500 16.500 2.500 14 0zM0 22V14L3 17 6.500 13.500 9 15.500 5.500 19.500 8 22zM22 22H14L16.500 19.500 13 15.500 15.500 13.500 19 17 22 14z" fill={c} /></Ico>
      <Ico w={28} h={28} className="mt-[34px]"><circle cx="14" cy="14" r="12.800" stroke={c} strokeWidth="2.200" /><path d="M10.500 11.500Q10.500 7.500 14 7.500T17.500 11Q17.500 13 14 14.800V17" stroke={c} strokeWidth="2.200" /><circle cx="14" cy="20.300" r="1.500" fill={c} /></Ico>
    </div>
  );
}

function Main() {
  return (
    <div className="relative flex h-[872px] overflow-hidden bg-[#3d4859]">
      <Ico w={1920} h={872} className="absolute left-0 top-0">
        <path d="M0 120Q60 90 110 150T190 210H1600L1637 160Q1680 172 1710 180 1740 172 1775 200 1840 198 1920 208V872H0z" fill="#3a4555" />
        <path d="M0 300Q50 270 100 350T190 400H1600L1637 418Q1670 436 1700 426 1735 418 1755 390 1790 375 1822 391 1880 385 1920 371V872H0z" fill="#374252" />
        <path d="M0 560Q50 500 100 530T190 600H1600L1637 499Q1680 470 1722 455 1740 455 1770 480 1810 520 1850 523H1920V872H0z" fill="#323b4b" />
      </Ico>
      <div className="w-[183px] shrink-0" />
      <div className="relative w-[1453px] shrink-0 pt-[2px]">
        <TitleBar />
        <Tabs />
        <div className="flex h-[101px] items-start rounded-[4px] border-y border-[#9db9e0] border-b-[#b6eaf2] bg-gradient-to-b from-[#dbe7f5] via-[#c9dbf0] to-[#e2f5fe] pt-px">
          <Clipboard />
          <FontGroup />
          <Paragraph />
          <StylesGroup />
          <Editing />
        </div>
        <Ruler />
        <DocArea />
        <StatusBar />
        <SharedTaskbar />
      </div>
      <div className="w-[184px] shrink-0 bg-gradient-to-r from-transparent from-85% to-black/10" />
      <div className="absolute left-[1309px] top-[742px] flex flex-col gap-[6px] leading-none text-[#a9adb1]/75">
        <Fit w={178} className="text-[22px]">Activate Windows</Fit>
        <Fit w={267} className="text-[17px]">Go to Settings to activate Windows.</Fit>
      </div>
      <div className="absolute bottom-0 left-0 h-[125px] w-[1820px] bg-gradient-to-b from-transparent to-black/45" />
      <Controls />
      <div className="absolute bottom-0 left-[1637px] flex h-[43px] w-[183px] items-center bg-[#323b4b] pb-[2px] font-['Lato'] text-[21px] leading-none text-white">
        <Fit w={67} className="font-bold">Talking:</Fit>
        <Fit w={95} className="ml-[6px]">Jagat Patel</Fit>
      </div>
      <Sidebar />
    </div>
  );
}

/* ---------- Local taskbar ---------- */
function Taskbar() {
  return (
    <div className="flex h-[50px] bg-[#2d2f32] text-[16px] leading-none text-white">
      <div className="flex w-[60px] items-center justify-center"><Win s={20} c="#fff" /></div>
      <div className="flex w-[430px] items-center border-t border-[#c8c8c8] bg-[#f1f1f1]">
        <div className="ml-[12px] h-[26px] w-[26px] rounded-full border-[3.500px] border-black" />
        <Fit w={153} className="ml-[12px] text-[17.500px] text-[#333]">Type here to search</Fit>
        <TaskMic c="#333" className="ml-auto mr-[18px]" />
      </div>
      <div className="flex items-center">
        <Ico w={22} h={20} className="ml-[19px]"><path d="M1 0V3.500H15V0M1 6.500H15V13.500H1zM1 20V16.500H15V20M19.500 0V4M19.500 10V20" stroke="#fff" strokeWidth="1.300" /><path d="M18 5.500H21V8.500H18z" fill="#fff" /></Ico>
        <Ico w={26} h={27} vb="0 0 24 25" className="ml-[40px]"><path d="M.5 11.500C2 4 7 .5 12.500.5 20 .5 23.500 6 23.500 11V14H8C8.300 20 16 21.500 22 17.800V23C13 27.500 3 24 3 15.500 3 11 5.500 8 8.800 6.700 8.200 7.800 8 9.200 8 10H16.500C16.500 3.500 7 3 .5 11.500z" fill="#0a7cd8" /></Ico>
        <Ico w={29} h={25} className="ml-[34px]"><path d="M0 1H12L14 4H29V23H0z" fill="#fde28c" /><path d="M0 1H12L14 4H0z" fill="#f5c333" /><path d="M6 24V13H23V24H18.500V18H10.500V24z" fill="#35b1e8" /></Ico>
        <Ico w={29} h={30} className="ml-[33px]"><path d="M10 8V5Q10 1 14.500 1T19 5V8" stroke="#fff" strokeWidth="1.600" /><path d="M0 7H29V29H0z" fill="#fff" /><path d="M8 12H14V18H8z" fill="#f25022" /><path d="M15 12H21V18H15z" fill="#7fba00" /><path d="M8 19H14V25H8z" fill="#00a4ef" /><path d="M15 19H21V25H15z" fill="#ffb900" /></Ico>
        <div className="ml-[18px] flex h-[50px] w-[61px] items-center justify-center border-b-[3px] border-[#76b9ed] bg-[#55575a] pt-[3px]">
          <Ico w={28} h={28} vb="0 0 48 48"><path d="M24 24L4.500 12.500A23 23 0 0 1 44 13H24z" fill="#df4a3c" /><path d="M24 24L33 29 24 47A23 23 0 0 1 4.500 12.500L15 30z" fill="#1da462" /><path d="M24 13H44A23 23 0 0 1 24 47L34 29z" fill="#ffce44" /><circle cx="24" cy="24" r="11" fill="#fff" /><circle cx="24" cy="24" r="8.800" fill="#4a8af4" /></Ico>
        </div>
        <Ico w={28} h={28} className="ml-[17px]"><path d="M14 .8L27 6V21.500L14 27.300 1 21.500V6z" fill="#1b2c60" /><path d="M14 2L25 6.500 14 11 3 6.500z" fill="#d0e9e6" /><path d="M2.500 7.500L13.500 12V26L2.500 21z" fill="#a9c6ee" /><path d="M14.500 12L25.500 7.500V21L14.500 26z" fill="#7ba5c9" /></Ico>
        <Ico w={28} h={28} className="ml-[34px]"><path d="M1.500 12V9Q1.500 2 9 2H19Q26.500 2 26.500 9V12M1.500 16V19Q1.500 26 9 26H19Q26.500 26 26.500 19V16" stroke="#f80d94" strokeWidth="3.200" /><path d="M8 6V18Q8 21 11 21 14 21 14 18V9V18Q14 21 17 21 20 21 20 18V6" stroke="#f80d94" strokeWidth="3" /></Ico>
        <Ico w={30} h={25} className="ml-[33px]"><path d="M0 8L15 0 30 8V24H0z" fill="#fff" /><path d="M3 8.500H27.500L17 13.500 24 20 13 14.500z" fill="#26282a" /></Ico>
      </div>
      <div className="ml-auto flex items-center">
        <div className="mt-[3px] flex h-[28px] w-[28px] items-center justify-center rounded-full border-[3px] border-white bg-[#0d96da] font-['Lato'] text-[22px] font-bold">?</div>
        <People c="#fff" className="ml-[31px]" />
        <Up c="#fff" className="ml-[33px]" />
        <Ico w={22} h={14} className="ml-[22px]"><path d="M6 3.500H19.500V12.500H6V9M21 6V10M1 2H6V5Q6 7 3.500 7T1 5zM2 0V2M5 0V2M3.500 7V12H6" stroke="#fff" strokeWidth="1.200" /></Ico>
        <Ico w={21} h={14} className="ml-[18px]"><path d="M2 12Q-1 8 3 6 4 1 9 1 13 1 14 5" fill="#bdbdbd" /><path d="M5 13.500Q2 10 6 8 9 4.500 13 7 17 4 20 9 22 13 18 13.500z" fill="#fff" /></Ico>
        <Ico w={17} h={16} className="ml-[22px]"><path d="M1 15Q2 2 16 1M5 15Q6 6 16 5M9 15Q10 9.500 16 9" stroke="#cfcfcf" strokeWidth="1.300" /><path d="M12.500 12H16V15.500H12.500z" fill="#fff" /></Ico>
        <Vol c="#ddd" className="ml-[21px]" />
        <div className="mb-[2px] ml-[18px] flex w-[30px] flex-col items-center gap-[7px]"><Fit w={29}>ENG</Fit><Fit w={15}>IN</Fit></div>
        <div className="mb-[2px] ml-[15px] flex w-[77px] flex-col items-center gap-[7px]"><Fit w={60}>07:17 PM</Fit><Fit w={77}>09-08-2019</Fit></div>
        <div className="relative ml-[22px] w-[46px]"><Note c="#fff" l="#222" /><span className="absolute left-[10px] top-[9px] flex h-[20px] w-[20px] items-center justify-center rounded-full border border-[#999] bg-[#2a2a2a] text-[14px]">1</span></div>
        <div className="mr-[4px] h-[50px] w-px bg-[#8a8a8a]" />
      </div>
    </div>
  );
}

export default function App() {
  return (
    <div className="flex h-[1080px] w-[1920px] flex-col overflow-hidden font-['Open_Sans',sans-serif] [font-variant-ligatures:none]">
      <Browser />
      <Header />
      <Main />
      <Taskbar />
    </div>
  );
}
